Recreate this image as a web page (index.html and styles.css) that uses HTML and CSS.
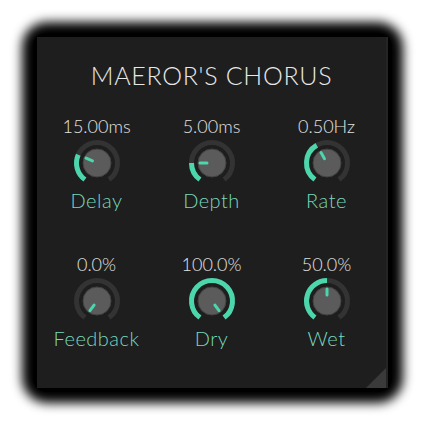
FILE: index.html
```html
<!DOCTYPE html>
<html>
<head>
<meta charset="utf-8">
<link rel="stylesheet" href="styles.css">
</head>
<body>
<div class="frame">
  <div class="panel">
    <h1 class="title">MAEROR'S CHORUS</h1>
    <div class="grid">
      <div class="cell">
        <div class="value">15.00ms</div>
        <svg class="knob" viewBox="0 0 50 50" width="50" height="50">
          <path class="track" d="M12.95 41.58 A20.5 20.5 0 1 1 37.05 41.58"/>
          <path class="fill" d="M12.95 41.58 A20.5 20.5 0 0 1 6.27 16.66"/>
          <circle class="cap" cx="25" cy="25" r="14"/>
          <line class="ptr" x1="20.43" y1="22.97" x2="14.04" y2="20.12"/>
        </svg>
        <div class="label">Delay</div>
      </div>
      <div class="cell">
        <div class="value">5.00ms</div>
        <svg class="knob" viewBox="0 0 50 50" width="50" height="50">
          <path class="track" d="M12.95 41.58 A20.5 20.5 0 1 1 37.05 41.58"/>
          <path class="fill" d="M12.95 41.58 A20.5 20.5 0 0 1 4.5 25"/>
          <circle class="cap" cx="25" cy="25" r="14"/>
          <line class="ptr" x1="20" y1="25" x2="13" y2="25"/>
        </svg>
        <div class="label">Depth</div>
      </div>
      <div class="cell">
        <div class="value">0.50Hz</div>
        <svg class="knob" viewBox="0 0 50 50" width="50" height="50">
          <path class="track" d="M12.95 41.58 A20.5 20.5 0 1 1 37.05 41.58"/>
          <path class="fill" d="M12.95 41.58 A20.5 20.5 0 0 1 14.75 7.25"/>
          <circle class="cap" cx="25" cy="25" r="14"/>
          <line class="ptr" x1="22.5" y1="20.67" x2="19" y2="14.6"/>
        </svg>
        <div class="label">Rate</div>
      </div>
      <div class="cell">
        <div class="value">0.0%</div>
        <svg class="knob" viewBox="0 0 50 50" width="50" height="50">
          <path class="track" d="M12.95 41.58 A20.5 20.5 0 1 1 37.05 41.58"/>
          <circle class="cap" cx="25" cy="25" r="14"/>
          <line class="ptr" x1="22.06" y1="29.05" x2="17.95" y2="34.71"/>
        </svg>
        <div class="label">Feedback</div>
      </div>
      <div class="cell">
        <div class="value">100.0%</div>
        <svg class="knob" viewBox="0 0 50 50" width="50" height="50">
          <path class="track" d="M12.95 41.58 A20.5 20.5 0 1 1 37.05 41.58"/>
          <path class="fill" d="M12.95 41.58 A20.5 20.5 0 1 1 37.05 41.58"/>
          <circle class="cap" cx="25" cy="25" r="14"/>
          <line class="ptr" x1="27.94" y1="29.05" x2="32.05" y2="34.71"/>
        </svg>
        <div class="label">Dry</div>
      </div>
      <div class="cell">
        <div class="value">50.0%</div>
        <svg class="knob" viewBox="0 0 50 50" width="50" height="50">
          <path class="track" d="M12.95 41.58 A20.5 20.5 0 1 1 37.05 41.58"/>
          <path class="fill" d="M12.95 41.58 A20.5 20.5 0 0 1 25 4.5"/>
          <circle class="cap" cx="25" cy="25" r="14"/>
          <line class="ptr" x1="25" y1="19" x2="25" y2="13"/>
        </svg>
        <div class="label">Wet</div>
      </div>
    </div>
    <div class="footer">
      <svg class="grip" viewBox="0 0 20 20" width="20" height="20"><polygon points="20,0 20,20 0,20"/></svg>
    </div>
  </div>
</div>
</body>
</html>
```
FILE: styles.css
```css
html, body {
  margin: 0;
  padding: 0;
  background: #ffffff;
}
body {
  font-family: "Lato", "Open Sans", sans-serif;
  font-weight: 300;
}
.frame {
  width: 351px;
  margin: 33px;
  padding: 4px;
  background: #000;
  border-radius: 14px;
  box-shadow: 0 0 11px 11px #000;
}
.panel {
  width: 351px;
  height: 351px;
  background: #1e1e1e;
  border-right: 2px solid #242424;
  box-sizing: border-box;
  display: flex;
  flex-direction: column;
  align-items: center;
}
.title {
  margin: 23px 0 0;
  font-size: 25px;
  line-height: 30px;
  font-weight: 300;
  letter-spacing: 0.7px;
  color: #e8e8e8;
  text-align: center;
}
.grid {
  display: grid;
  grid-template-columns: 115px 115px 115px;
  row-gap: 43px;
  margin-top: 26px;
}
.cell {
  display: flex;
  flex-direction: column;
  align-items: center;
}
.value {
  font-size: 18px;
  line-height: 20px;
  color: #e2e2e2;
  margin-bottom: 2px;
}
.knob {
  display: block;
}
.track {
  fill: none;
  stroke: #333333;
  stroke-width: 5;
}
.fill {
  fill: none;
  stroke: #4bd6ac;
  stroke-width: 5;
}
.cap {
  fill: #5b5b5b;
  stroke: #424242;
  stroke-width: 1;
}
.ptr {
  stroke: #4bd6ac;
  stroke-width: 3;
  stroke-linecap: round;
}
.label {
  margin-top: 1px;
  font-size: 20px;
  line-height: 22px;
  letter-spacing: 0.5px;
  color: #78d9bd;
}
.footer {
  margin-top: auto;
  align-self: stretch;
  display: flex;
  justify-content: flex-end;
}
.grip {
  display: block;
  fill: #3a3a3a;
}
```
